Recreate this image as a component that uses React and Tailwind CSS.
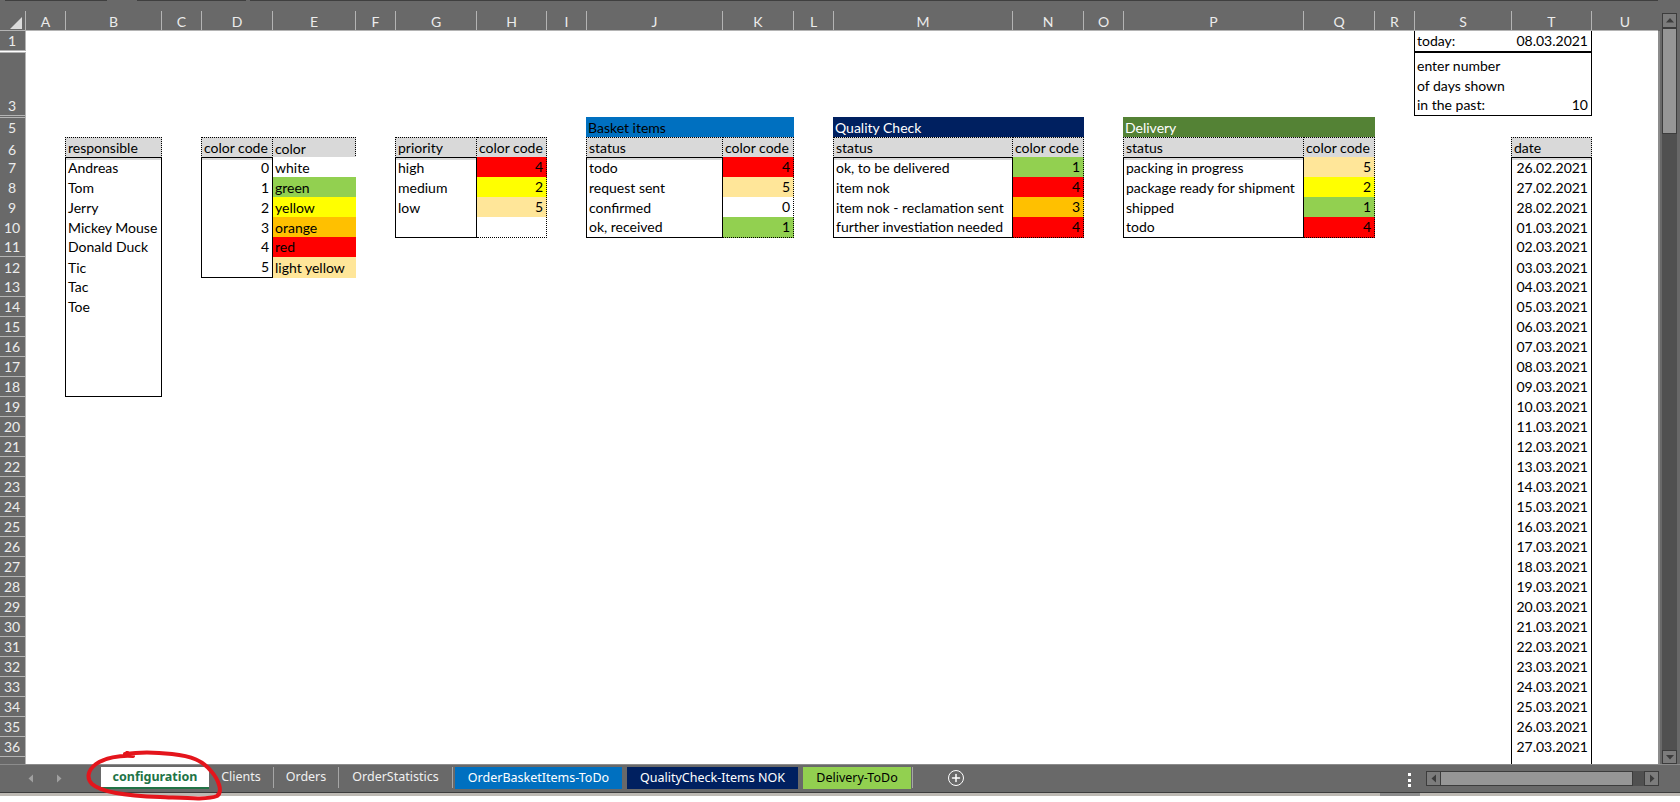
import React from 'react';
import { Plus } from 'lucide-react';

const COLS = ['A', 'B', 'C', 'D', 'E', 'F', 'G', 'H', 'I', 'J', 'K', 'L', 'M', 'N', 'O', 'P', 'Q', 'R', 'S', 'T', 'U'];
const HEAD_GRID = 'grid grid-cols-[26px_40px_96px_40px_71px_83px_40px_81px_70px_40px_136px_71px_40px_179px_71px_40px_180px_71px_40px_97px_80px_66px]';
// body columns start one pixel earlier after a blank column, so box borders sit on the header separators
const GRID = 'grid grid-cols-[26px_39px_97px_39px_72px_83px_39px_82px_70px_39px_137px_71px_39px_180px_71px_39px_181px_71px_39px_97px_81px_66px]';

const RED = 'bg-[#ff0000]';
const YELLOW = 'bg-[#ffff00]';
const GREEN = 'bg-[#92d050]';
const ORANGE = 'bg-[#ffc000]';
const LIGHT = 'bg-[#ffe699]';
const WHITE = 'bg-white';
const COLOR = { 0: WHITE, 1: GREEN, 2: YELLOW, 3: ORANGE, 4: RED, 5: LIGHT };

const HEAD_R = 'bg-[#d9d9d9] pb-[2px] border-t border-x border-dotted border-black';
const CODE = 'border-b border-r border-dotted border-black';

const cells = {};
const put = (key, text, className = '', right = false) => {
  cells[key] = { text, className, right };
};

// solid box down one column, first and last row close it
const box = (col, from, to, values, right = false) => {
  for (let r = from; r <= to; r++) {
    let cls = 'border-x border-solid border-black';
    if (r === from) cls = 'border-x border-t border-solid border-black';
    if (r === to) cls = 'border-x border-b border-solid border-black';
    put(col + r, values[r - from] ?? '', cls, right);
  }
};

// status / color code table
const statusTable = (left, right, head, rows) => {
  put(left + 6, head, HEAD_R);
  put(right + 6, 'color code', 'bg-[#d9d9d9] pb-[2px] border-t border-r border-dotted border-black');
  box(left, 7, 10, rows.map((row) => row[0]));
  rows.forEach((row, i) => {
    put(right + (7 + i), row[1], `${COLOR[row[1] === '' ? 0 : row[1]]} ${CODE}`, true);
  });
};

put('B6', 'responsible', HEAD_R);
box('B', 7, 18, ['Andreas', 'Tom', 'Jerry', 'Mickey Mouse', 'Donald Duck', 'Tic', 'Tac', 'Toe']);

put('D6', 'color code', HEAD_R);
put('E6', 'color', 'bg-[#d9d9d9] border-t border-r border-b border-dotted border-black');
box('D', 7, 12, [0, 1, 2, 3, 4, 5], true);
['white', 'green', 'yellow', 'orange', 'red', 'light yellow'].forEach((name, i) => {
  put('E' + (7 + i), name, COLOR[i]);
});

statusTable('G', 'H', 'priority', [['high', 4], ['medium', 2], ['low', 5], ['', '']]);

put('J5', 'Basket items', 'bg-[#0070c0] text-black');
put('K5', '', 'bg-[#0070c0]');
statusTable('J', 'K', 'status', [['todo', 4], ['request sent', 5], ['confirmed', 0], ['ok, received', 1]]);

put('M5', 'Quality Check', 'bg-[#002060] text-white');
put('N5', '', 'bg-[#002060]');
statusTable('M', 'N', 'status', [['ok, to be delivered', 1], ['item nok', 4], ['item nok - reclamation sent', 3], ['further investiation needed', 4]]);

put('P5', 'Delivery', 'bg-[#548235] text-white');
put('Q5', '', 'bg-[#548235]');
statusTable('P', 'Q', 'status', [['packing in progress', 5], ['package ready for shipment', 2], ['shipped', 1], ['todo', 4]]);

put('S1', 'today:', 'border-l border-b border-solid border-black');
put('T1', '08.03.2021', 'border-r border-b border-solid border-black', true);
put('S3', <>enter number<br />of days shown<br />in the past:</>, 'border-l border-t border-b border-solid border-black items-end');
put('T3', 10, 'border-r border-t border-b border-solid border-black items-end', true);

put('T6', 'date', HEAD_R);
const dates = [];
for (let d = 26; d <= 28; d++) dates.push(`${d}.02.2021`);
for (let d = 1; d <= 27; d++) dates.push(`${String(d).padStart(2, '0')}.03.2021`);
box('T', 7, 37, dates, true);
put('T37', '', 'border-x border-solid border-black');

const ROWS = [
  { n: 1, h: 'h-[21px]', head: 'border-b border-[#b4b4b4] h-[20px]' },
  { n: 3, h: 'h-[64px]', head: 'border-y border-[#b4b4b4]' },
  { n: 4, h: 'h-px', head: '', blank: true },
  { n: 5, h: 'h-[20px]', head: 'border-y border-[#b4b4b4]' },
];
for (let n = 6; n <= 36; n++) ROWS.push({ n, h: 'h-[20px]', head: 'border-b border-[#b4b4b4]' });
ROWS.push({ n: 37, h: 'h-[20px]', head: '', blank: true });

const Cell = ({ cell }) => {
  if (!cell) return <div />;
  return (
    <div
      className={`flex min-w-0 whitespace-nowrap pl-[2px] pr-[3px] ${cell.right ? 'justify-end' : 'justify-start'} ${
        cell.className.includes('items-end') ? '' : 'items-center'
      } ${cell.className}`}
    >
      <span className="leading-[19.6px]">{cell.text}</span>
    </div>
  );
};

const Row = ({ row }) => (
  <div className={`${GRID} ${row.h}`}>
    <div className={`flex items-end justify-center border-r border-r-[#b4b4b4] bg-[#696969] text-[#ececec] ${row.head}`}>
      {!row.blank && <span className="pr-px leading-[19px]">{row.n}</span>}
    </div>
    {COLS.map((c) => (
      <Cell key={c} cell={cells[c + row.n]} />
    ))}
  </div>
);

const TABS = [
  { label: 'configuration', cls: 'w-[108px] h-[22px] bg-white border-b-2 border-[#217346] font-bold text-[#217346]' },
  { label: 'Clients', cls: 'w-[65px] h-[21px] border-r border-[#a6a6a6] text-[#f0f0f0]' },
  { label: 'Orders', cls: 'w-[65px] h-[21px] border-r border-[#a6a6a6] text-[#f0f0f0]' },
  { label: 'OrderStatistics', cls: 'w-[114px] h-[21px] border-r border-[#a6a6a6] text-[#f0f0f0]' },
  { label: 'OrderBasketItems-ToDo', cls: 'ml-[2px] w-[167px] h-[22px] bg-[#0070c0] text-white' },
  { label: 'QualityCheck-Items NOK', cls: 'ml-[5px] w-[171px] h-[22px] bg-[#002060] text-white' },
  { label: 'Delivery-ToDo', cls: 'ml-[5px] w-[108px] h-[22px] bg-[#92d050] text-black' },
];

const Arrow = ({ dir, className = 'fill-[#3c3c3c]' }) => (
  <svg width="8" height="9" viewBox="0 0 8 9" className={className}>
    <path d={dir === 'left' ? 'M6 0.5v8L1.5 4.5z' : dir === 'right' ? 'M2 0.5v8L6.5 4.5z' : dir === 'up' ? 'M0 6.5h8L4 2z' : 'M0 2h8L4 6.5z'} />
  </svg>
);

export default function App() {
  return (
    <div className="relative h-[802px] w-[1680px] overflow-hidden bg-white font-['Lato','Liberation_Sans',sans-serif] text-[14px] text-black">
      <div className="flex h-[764px] bg-[#696969]">
        <div className="flex w-[1658px] flex-col">
          {/* formula bar remains */}
          <div className="flex h-[11px] gap-[4px] pl-[5px]">
            <div className="h-px w-[102px] bg-[#3f3f3f]" />
            <div className="ml-[26px] h-px w-[109px] bg-[#3f3f3f]" />
            <div className="h-px flex-1 bg-[#3f3f3f]" />
          </div>
          <div className={`${HEAD_GRID} h-[20px] border-b border-[#b4b4b4] text-[#ececec]`}>
            <div className="flex items-end justify-end border-r border-[#b4b4b4] pb-[3px] pr-[3px]">
              <svg width="12" height="12" viewBox="0 0 12 12">
                <path d="M12 0v12H0z" fill="#dcdcdc" />
              </svg>
            </div>
            {COLS.map((c) => (
              <div key={c} className={`flex items-center justify-center ${c === 'U' ? '' : 'border-r border-[#b4b4b4]'}`}>
                {c}
              </div>
            ))}
          </div>
          <div className="min-h-0 flex-1 overflow-hidden bg-white">
            {ROWS.map((row) => (
              <Row key={row.n} row={row} />
            ))}
          </div>
        </div>

        {/* vertical scrollbar */}
        <div className="flex w-[22px] flex-col">
          <div className="h-[31px] shrink-0 pl-[4px] pt-[13px]">
            <div className="flex h-[15px] w-[15px] items-center justify-center border border-[#3c3c3c] bg-[#7c7c7c]">
              <Arrow dir="up" />
            </div>
          </div>
          <div className="flex min-h-0 flex-1">
            <div className="w-[2px] bg-[#8c8c8c]" />
            <div className="ml-[2px] -mt-[3px] flex w-[15px] flex-col bg-[#505050]">
              <div className="h-[106px] border border-[#3c3c3c] bg-[#969696]" />
              <div className="flex-1" />
              <div className="flex h-[14px] items-center justify-center border border-[#3c3c3c] bg-[#7c7c7c]">
                <Arrow dir="down" />
              </div>
            </div>
          </div>
        </div>
      </div>

      {/* sheet tabs */}
      <div className="flex h-[28px] items-start border-t border-[#8c8c8c] bg-[#696969] pr-[21px] font-['Noto_Sans','Liberation_Sans',sans-serif] text-[12.5px]">
        <div className="flex h-[26px] w-[101px] items-center pl-[27px]">
          <Arrow dir="left" className="fill-[#a0a0a0]" />
          <div className="ml-[20px]">
            <Arrow dir="right" className="fill-[#a0a0a0]" />
          </div>
        </div>
        <div className="flex items-start pt-[2px]">
          {TABS.map((tab) => (
            <div key={tab.label} className={`flex items-center justify-center whitespace-nowrap ${tab.cls}`}>
              {tab.label}
            </div>
          ))}
          <div className="ml-px h-[21px] border-r border-[#a6a6a6]" />
        </div>
        <div className="ml-[35px] mt-[5px] flex h-[16px] w-[16px] items-center justify-center rounded-full border-[1.5px] border-white text-white">
          <Plus size={12} strokeWidth={3} />
        </div>
        <div className="flex-1" />
        <div className="mr-[15px] mt-[8px] flex flex-col gap-[2.5px]">
          <div className="h-[3px] w-[3px] bg-white" />
          <div className="h-[3px] w-[3px] bg-white" />
          <div className="h-[3px] w-[3px] bg-white" />
        </div>
        <div className="mt-[6px] flex h-[15px] w-[233px] bg-[#505050]">
          <div className="flex w-[15px] items-center justify-center border border-[#3c3c3c] bg-[#7c7c7c]">
            <Arrow dir="left" />
          </div>
          <div className="w-[192px] border-y border-r border-[#3c3c3c] bg-[#969696]" />
          <div className="flex-1" />
          <div className="flex w-[15px] items-center justify-center border border-[#3c3c3c] bg-[#7c7c7c]">
            <Arrow dir="right" />
          </div>
        </div>
      </div>
      <div className="h-px bg-[#3c3c3c]" />
      <div className="flex h-[3px] bg-[#bdb9b3]">
        <div className="ml-[1380px] w-[40px] bg-[#8c8c8c]" />
      </div>

      {/* red marker scribble around the first tab */}
      <svg className="pointer-events-none absolute left-0 top-0" width="1680" height="802" viewBox="0 0 1680 802" fill="none">
        <path
          d="M127 753 L133 756 C120 755 104 758 96 764 C88 770 86 778 92 784 C102 793 130 796 160 797 C185 798 208 800 217 796 C223 792 219 780 211 771 C203 761 192 756 172 754 C155 752 138 752 125 754"
          stroke="#e4151c"
          strokeWidth="4"
          strokeLinecap="round"
          strokeLinejoin="round"
        />
      </svg>
    </div>
  );
}
